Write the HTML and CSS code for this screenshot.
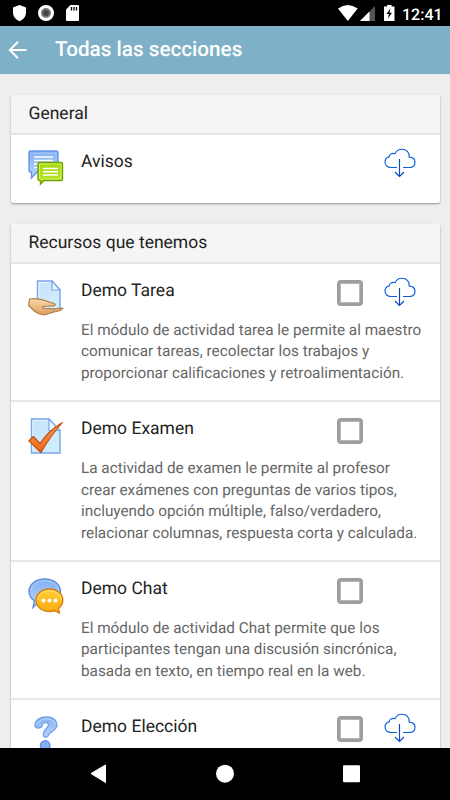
FILE: index.html
```html
<!DOCTYPE html>
<html lang="es">
<head>
<meta charset="utf-8">
<title>Todas las secciones</title>
<link rel="stylesheet" href="styles.css">
</head>
<body>
<svg class="defs" width="0" height="0" aria-hidden="true">
  <defs>
    <linearGradient id="blue" x2="0" y2="1"><stop stop-color="#82b0f3"/><stop offset="1" stop-color="#b9d6fc"/></linearGradient>
    <linearGradient id="paper" x2="1" y2="1"><stop stop-color="#c5e1fa"/><stop offset="1" stop-color="#d3f0fc"/></linearGradient>
    <linearGradient id="green" x2="0" y2="1"><stop stop-color="#a5d80f"/><stop offset="1" stop-color="#b9e52a"/></linearGradient>
    <linearGradient id="skin" x2="0" y2="1"><stop stop-color="#fbd9ab"/><stop offset="1" stop-color="#d99d5c"/></linearGradient>
    <linearGradient id="orange" x2="0" y2="1"><stop stop-color="#f0a060"/><stop offset="1" stop-color="#ee6512"/></linearGradient>
    <linearGradient id="gold" x2="0" y2="1"><stop stop-color="#ffd03a"/><stop offset="1" stop-color="#fba90c"/></linearGradient>
    <symbol id="cloud" viewBox="0 0 32 30">
      <path d="M13 19.500H7C3.500 19.500 1 17.300 1 14.100C1 11.200 3 9.400 5.200 8.900C5 6.800 7.600 4.700 11 5.700C12.300 2.800 14.800 1.200 17.800 1.200C22.300 1.200 25.800 4.600 25.200 9.100C28.700 9.200 31 11.300 31 14.300C31 17.500 28.800 19.500 25.500 19.500H19" fill="none" stroke="#0b5fe0" stroke-width="1.150"/>
      <path d="M15.500 11V28.500M11 24L15.500 28.500L20 24" fill="none" stroke="#0b47c4" stroke-width="1.150"/>
    </symbol>
  </defs>
</svg>
<div class="status">
  <svg class="status-left" width="100" height="26" viewBox="0 0 100 26">
    <path d="M19.500 5L26 7.500V12C26 16.500 23.500 19.800 19.500 21.200C15.500 19.800 13 16.500 13 12V7.500Z" fill="#fff"/>
    <circle cx="46" cy="13" r="6.500" fill="#777" stroke="#fff" stroke-width="3"/><circle cx="46" cy="13" r="3" fill="#444"/>
    <path d="M70.500 5H78Q79 5 79 6V20Q79 21 78 21H67Q66 21 66 20V9.500Z" fill="#fff"/><path d="M71.500 7V10.500M74 7V10.500M76.500 7V10.500" stroke="#000" stroke-width="1.300"/>
  </svg>
  <svg class="status-right" width="62" height="26" viewBox="338 0 62 26">
    <path d="M338 8.500Q347.800 1.500 357.700 8.500L347.800 21Z" fill="#fff"/>
    <path d="M360 21L375 6V21Z" fill="#555"/><path d="M360 21L369.500 11.500V21Z" fill="#fff"/>
    <path d="M384 6.500H387V5H391.500V6.500H394.500V21H384Z" fill="#fff"/><path d="M390.300 8.500L386.500 14H389L388 18.500L392 12.700H389.500Z" fill="#000"/>
  </svg>
  <span class="clock">12:41</span>
</div>
<header class="bar">
  <svg width="20" height="20" viewBox="0 0 20 20"><path d="M18.500 10H2.500M10 1.800L1.800 10L10 18.200" fill="none" stroke="#fff" stroke-width="2"/></svg>
  <h1>Todas las secciones</h1>
</header>
<main>
  <section class="card">
    <h2>General</h2>
    <article class="item notice">
      <svg class="icon" viewBox="0 0 36 36">
        <path d="M2.500 1H28.500Q30 1 30 2.500V20.500Q30 22 28.500 22H9L3.500 28V22H2.500Q1 22 1 20.500V2.500Q1 1 2.500 1Z" fill="url(#blue)" stroke="#6594e4" stroke-width="1.400"/>
        <path d="M3 3.200H28V20" fill="none" stroke="#a8cafa" stroke-width="1"/>
        <path d="M6 7H25M6 10.500H25M6 14H25M6 17.500H20" stroke="#fff" stroke-width="1.400"/>
        <path d="M11.500 12.500H33Q34.500 12.500 34.500 14V29Q34.500 30.500 33 30.500H16L12.500 34V30.500H11.500Q10 30.500 10 29V14Q10 12.500 11.500 12.500Z" fill="url(#green)" stroke="#6ca500" stroke-width="1.400"/>
        <path d="M11.500 14H33V29H11.500Z" fill="none" stroke="#d2ef67"/>
        <path d="M15 18.500H30M15 21.700H30M15 25H30" stroke="#fff" stroke-width="1.500"/>
      </svg>
      <div class="body"><h3>Avisos</h3></div>
      <svg class="cloud"><use href="#cloud"/></svg>
    </article>
  </section>
  <section class="card topic">
    <h2>Recursos que tenemos</h2>
    <article class="item tarea">
      <svg class="icon" viewBox="0 0 36 36">
        <path d="M9.500 1H24L32 10V29H9.500Z" fill="url(#paper)" stroke="#79a5ec" stroke-width="1.400"/>
        <path d="M11 2.500H22.500M11 2.500V20" stroke="#eaf7ff" fill="none"/>
        <path d="M24 1V10H32Z" fill="#ecf8ff" stroke="#79a5ec" stroke-width="1.200"/>
        <path d="M1.500 19Q9 18 17 20.500L27 24Q28 26 24 26L15 26.500Q14 28 16 28.500L27 29Q31 28 35 28Q33 31 26 32L16 35Q11 34.500 7 31.500L.7 25.500Z" fill="url(#skin)" stroke="#b17a45" stroke-width="1.200" stroke-linejoin="round"/>
      </svg>
      <div class="body"><h3>Demo Tarea</h3>
        <p>El módulo de actividad tarea le permite al maestro<br>comunicar tareas, recolectar los trabajos y<br>proporcionar calificaciones y retroalimentación.</p></div>
      <span class="check"></span>
      <svg class="cloud"><use href="#cloud"/></svg>
    </article>
    <article class="item examen">
      <svg class="icon" viewBox="0 0 36 36">
        <path d="M3.500 1H21L32 13V35H3.500Z" fill="url(#paper)" stroke="#79a5ec" stroke-width="1.400"/>
        <path d="M5 33.500V2.500H20" fill="none" stroke="#edf8ff"/>
        <path d="M21 1V12.500H32Z" fill="#eef9ff" stroke="#79a5ec" stroke-width="1.200"/>
        <path d="M.8 22.800L5.300 18.500L12 25.500Q20 13 34.500 4.500Q23 17 13 34.500Z" fill="url(#orange)" stroke="#c24a0b" stroke-width="1.100" stroke-linejoin="round"/>
      </svg>
      <div class="body"><h3>Demo Examen</h3>
        <p>La actividad de examen le permite al profesor<br>crear exámenes con preguntas de varios tipos,<br>incluyendo opción múltiple, falso/verdadero,<br>relacionar columnas, respuesta corta y calculada.</p></div>
      <span class="check"></span>
    </article>
    <article class="item chat">
      <svg class="icon" viewBox="0 0 36 36">
        <path d="M16.800 1C25.500 1 32.500 6.500 32.500 13.500C32.500 20.500 25.500 26 16.800 26Q13 26 10 24.800L5 29.500L6.500 23C3 20.500 1 17.500 1 13.500C1 6.500 8 1 16.800 1Z" fill="url(#blue)" stroke="#628fdc" stroke-width="1.400"/>
        <path d="M2.800 13C3 7 9 2.800 16.800 2.800S30.500 7 30.800 12" fill="none" stroke="#b8d2fa"/>
        <path d="M21.500 11C29 11 34.800 16 34.800 22C34.800 25.500 33.200 28.300 30.500 30.300L31.500 35L26.500 32.500Q24 33.500 21.500 33.500C14 33.500 8 28.500 8 22C8 16 14 11 21.500 11Z" fill="url(#gold)" stroke="#d38210" stroke-width="1.400"/>
        <path d="M9.800 22C10 16.500 15 12.800 21.500 12.800S33 16.500 33.200 22" fill="none" stroke="#ffe27a"/>
        <g fill="#fff"><circle cx="15.500" cy="22.500" r="2"/><circle cx="21.500" cy="22.500" r="2"/><circle cx="27.500" cy="22.500" r="2"/></g>
      </svg>
      <div class="body"><h3>Demo Chat</h3>
        <p>El módulo de actividad Chat permite que los<br>participantes tengan una discusión sincrónica,<br>basada en texto, en tiempo real en la web.</p></div>
      <span class="check"></span>
    </article>
    <article class="item eleccion">
      <svg class="icon" viewBox="0 0 36 36">
        <path d="M7 9.500C7 4 12 1 18.500 1C25.500 1 29 4.500 29 9C29 15 20.500 15.500 20 20Q17.500 22 15.500 20C14 14 20.500 12.500 20.500 8.500C20.500 6.500 16 5.500 14.500 8C14.500 11 12.500 12 10.500 12Q7 12 7 9.500Z" fill="url(#blue)" stroke="#719feb" stroke-width="1.300"/>
        <path d="M9 8Q12 2.800 19 2.800Q26 3 27 8.500" fill="none" stroke="#c5defe"/>
        <circle cx="17.200" cy="29.500" r="4.800" fill="#84aff2" stroke="#5e8bdf" stroke-width="1.300"/>
      </svg>
      <div class="body"><h3>Demo Elección</h3></div>
      <span class="check"></span>
      <svg class="cloud"><use href="#cloud"/></svg>
    </article>
  </section>
</main>
<nav class="nav">
  <svg width="450" height="52" viewBox="0 0 450 52"><path d="M91 25.500L105.500 17V34.500Z" fill="#fff" stroke="#fff" stroke-linejoin="round"/><circle cx="225" cy="25.700" r="9" fill="#fff"/><rect x="343" y="17.300" width="17" height="17" rx="1" fill="#fff"/></svg>
</nav>
</body>
</html>
```

FILE: styles.css
```css
* { box-sizing: border-box; }
body { margin: 0; width: 450px; height: 800px; overflow: hidden; display: flex; flex-direction: column; background: #eeeeef; font-family: Roboto, sans-serif; color: #222; text-rendering: geometricPrecision; }
.defs { position: absolute; }
h1, h2, h3, p { margin: 0; font-weight: 400; }
.status { height: 26px; flex: none; background: #000; display: flex; align-items: center; color: #fff; }
.status svg { flex: none; }
.status-right { margin-left: 238px; }
.clock { margin-left: 2px; padding-top: 2px; font-size: 16px; font-weight: 500; white-space: nowrap; }
.bar { height: 48px; flex: none; display: flex; align-items: center; background: #7eb0c7; padding: 0 0 0 8px; }
.bar h1 { margin-left: 27px; color: #fff; font-size: 20.700px; font-weight: 500; line-height: 49px; white-space: nowrap; }
main { flex: 1; min-height: 0; overflow: hidden; padding: 21px 10px 0 11px; }
.card { background: #fff; border-radius: 2px; overflow: hidden; box-shadow: 0 1px 2px rgba(0,0,0,.38); margin-bottom: 21px; }
.card h2 { height: 39.500px; padding-left: 17.500px; border-bottom: 2px solid #e5e5e5; background: #f5f5f5; font-size: 17.500px; line-height: 39.500px; white-space: nowrap; }
.topic h2 { height: 40px; }
.item { display: flex; align-items: flex-start; padding: 16px 24px 0 17px; border-bottom: 2px solid #e8e8e8; }
.notice { height: 68px; padding-top: 15.500px; border: 0; }
.notice h3 { margin-top: .5px; }
.tarea { height: 138.500px; }
.examen { height: 159.500px; }
.chat { height: 138px; }
.eleccion { height: 138px; }
.icon { width: 36px; height: 36px; flex: none; }
.body { margin-left: 17px; width: 256px; flex: none; white-space: nowrap; }
.body h3 { font-size: 17.500px; line-height: 22px; }
.body p { margin-top: 18px; color: #666; font-size: 15.300px; line-height: 21.600px; }
.check { flex: none; width: 26px; height: 26px; background: #fff; border: 3px solid #9e9e9e; border-radius: 4px; box-shadow: inset 0 0 0 .7px #9e9e9e; }
.cloud { flex: none; margin-left: auto; width: 32px; height: 30px; margin-top: -2px; }
.tarea .cloud, .eleccion .cloud { margin-top: -3px; }
.nav { height: 52px; flex: none; background: #000; }
.nav svg { display: block; }
```
